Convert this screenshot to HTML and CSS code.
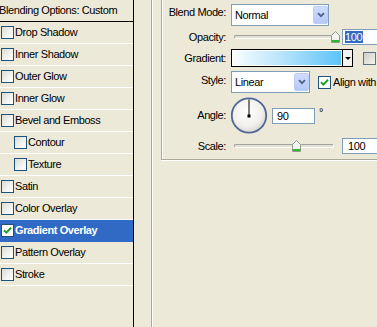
FILE: index.html
```html
<!DOCTYPE html>
<html lang="en">
<head>
    <meta charset="UTF-8">
    <title>Layer Style - Gradient Overlay</title>
    <link rel="stylesheet" href="styles.css">
</head>
<body>
    <div class="sidebar">
        <div class="head">Blending Options: Custom</div>
        <ul class="effects">
            <li><span class="check"></span>Drop Shadow</li>
            <li><span class="check"></span>Inner Shadow</li>
            <li><span class="check"></span>Outer Glow</li>
            <li><span class="check"></span>Inner Glow</li>
            <li><span class="check"></span>Bevel and Emboss</li>
            <li class="sub"><span class="check"></span>Contour</li>
            <li class="sub"><span class="check"></span>Texture</li>
            <li><span class="check"></span>Satin</li>
            <li><span class="check"></span>Color Overlay</li>
            <li class="on"><span class="check"><svg width="9" height="9" viewBox="0 0 9 9"><path d="M1 4.2 L3.4 6.6 L8 1.8" fill="none" stroke="#21a121" stroke-width="2"/></svg></span>Gradient Overlay</li>
            <li><span class="check"></span>Pattern Overlay</li>
            <li><span class="check"></span>Stroke</li>
        </ul>
    </div>
    <div class="panel">
        <div class="outer">
            <div class="group">
                <div class="row r-mode">
                    <span class="lbl">Blend Mode:</span>
                    <div class="select w-mode"><span class="val">Normal</span><span class="drop"><svg width="8" height="6" viewBox="0 0 8 6"><path d="M1 1.2 L4 4.2 L7 1.2" fill="none" stroke="#4d6185" stroke-width="1.8"/></svg></span></div>
                </div>
                <div class="row r-small">
                    <span class="lbl">Opacity:</span>
                    <div class="slider">
                        <span class="track"></span>
                        <svg class="thumb" style="left:100px" width="9" height="12" viewBox="0 0 9 12"><path d="M0.5 4.5 L4.5 0.5 L8.5 4.5 V11.5 H0.5 Z" fill="#f3f3ef" stroke="#8d9a8d"/><rect x="1" y="9" width="7" height="2" fill="#2eb82e"/></svg>
                    </div>
                    <span class="field w-num"><span class="sel">100</span></span>
                </div>
                <div class="row r-grad">
                    <span class="lbl">Gradient:</span>
                    <div class="grad"><span class="grad-fill"></span><span class="grad-arrow"><i></i></span></div>
                    <span class="check plain"></span>
                </div>
                <div class="row r-style">
                    <span class="lbl">Style:</span>
                    <div class="select w-style"><span class="val">Linear</span><span class="drop"><svg width="8" height="6" viewBox="0 0 8 6"><path d="M1 1.2 L4 4.2 L7 1.2" fill="none" stroke="#4d6185" stroke-width="1.8"/></svg></span></div>
                    <span class="check align"><svg width="9" height="9" viewBox="0 0 9 9"><path d="M1 4.2 L3.4 6.6 L8 1.8" fill="none" stroke="#21a121" stroke-width="2"/></svg></span>
                    <span class="opt">Align with</span>
                </div>
                <div class="row r-angle">
                    <span class="lbl">Angle:</span>
                    <svg class="dial" width="37" height="37" viewBox="0 0 37 37">
                        <defs>
                            <radialGradient id="dialFill" cx="0.45" cy="0.4" r="0.6">
                                <stop offset="0" stop-color="#ffffff"/>
                                <stop offset="0.7" stop-color="#f1f0ec"/>
                                <stop offset="1" stop-color="#d9d7cf"/>
                            </radialGradient>
                        </defs>
                        <circle cx="18" cy="18.5" r="17.2" fill="url(#dialFill)" stroke="#4f6797" stroke-width="1.8"/>
                        <line x1="18" y1="2.5" x2="18" y2="19" stroke="#000" stroke-width="1"/>
                        <rect x="16.5" y="17.5" width="3" height="3" fill="#000"/>
                    </svg>
                    <span class="field w-angle">90</span>
                    <span class="deg">°</span>
                </div>
                <div class="row r-small r-scale">
                    <span class="lbl">Scale:</span>
                    <div class="slider">
                        <span class="track"></span>
                        <svg class="thumb" style="left:61px" width="9" height="12" viewBox="0 0 9 12"><path d="M0.5 4.5 L4.5 0.5 L8.5 4.5 V11.5 H0.5 Z" fill="#f3f3ef" stroke="#8d9a8d"/><rect x="1" y="9" width="7" height="2" fill="#2eb82e"/></svg>
                    </div>
                    <span class="field w-num">100</span>
                </div>
            </div>
        </div>
    </div>
</body>
</html>
```

FILE: styles.css
```css
body,html{margin: 0; padding: 0;}
body{
    width: 377px; height: 327px; overflow: hidden; display: flex;
    background: #ece9d8; color: #000;
    font: 11px/13px "Liberation Sans", Arial, sans-serif; letter-spacing: -0.4px;
}

/* left list of effects */
.sidebar{width: 133px; flex: none; border-right: 1px solid #000; overflow: hidden;}
.head{height: 21px; line-height: 20px; border-bottom: 1px solid #000; margin-left: -1px; white-space: nowrap;}
.effects{list-style: none; margin: 0; padding: 0;}
.effects>li{
    height: 21px; border-bottom: 1px solid #fff; padding-left: 1px;
    display: flex; align-items: center; gap: 1px; white-space: nowrap;
}
.effects>li.sub{padding-left: 14px;}
.effects>li.on{background: #316ac5; border-bottom-color: #316ac5; color: #fff; font-weight: bold;}

.check{
    width: 11px; height: 11px; flex: none; border: 1px solid #1c5180;
    background: linear-gradient(135deg, #dcdcd5, #f7f7f4 70%, #fff);
    display: flex; align-items: center; justify-content: center;
}
.effects>li.on .check{background: #fff;}

/* right side group boxes */
.panel{flex: 1; padding-left: 17px;}
.outer{height: 100%; border-left: 1px solid #aca899; box-shadow: inset 1px 0 0 #fff; padding-left: 9px;}
.group{
    width: 260px; padding: 4px 0 5px;
    border-left: 1px solid #aca899; border-bottom: 1px solid #aca899;
    box-shadow: inset 1px 0 0 #fff, 0 1px 0 #fff;
}
.row{display: flex; align-items: center; white-space: nowrap;}
.lbl{width: 64px; margin-right: 5px; flex: none; text-align: right;}

.r-mode{height: 22px;}
.r-mode>.lbl{align-self: flex-start; margin-top: 2px;}
.r-small{height: 16px; margin-top: 3px;}
.r-grad{height: 18px; margin-top: 4px;}
.r-style{height: 22px; margin-top: 4px;}
.r-style>.lbl{align-self: flex-start; margin-top: 3px;}
.r-angle{height: 37px; margin-top: 4px;}
.r-scale{margin-top: 4px;}

.select{height: 20px; border: 1px solid #7f9db9; background: #fff; display: flex; flex: none;}
.select>.val{flex: 1; padding-left: 3px; line-height: 20px;}
.select>.drop{
    width: 13px; margin: 1px 0; border: 1px solid #bccdf8; border-radius: 2px;
    background: linear-gradient(#cfdcfd, #b6c9f7);
    display: flex; align-items: center; justify-content: center;
}
.w-mode{width: 96px;}
.w-style{width: 77px;}

.slider{width: 111px; height: 16px; position: relative; flex: none; display: flex; align-items: center;}
.track{
    width: 98px; height: 2px; margin-left: 3px;
    border: 1px solid; border-color: #a3a29c #fff #fff #a3a29c; border-radius: 2px; background: #e3e1d6;
}
.thumb{position: absolute; top: 2px;}

.field{height: 14px; line-height: 14px; border: 1px solid #7f9db9; background: #fff; padding-left: 4px; flex: none;}
.w-num{width: 40px;}
.w-num .sel{background: #316ac5; color: #fff; padding: 0 1px 0 0; margin-left: -2px;}
.r-scale .w-num{padding-left: 5px;}
.w-angle{width: 37px; margin-left: 4px;}
.deg{margin-left: 4px; align-self: flex-start; margin-top: 9px;}

.grad{width: 120px; height: 16px; border: 1px solid #000; display: flex; flex: none;}
.grad-fill{flex: 1; border: 1px solid #fff; background: linear-gradient(to right, #fafdff, #b8e4fb 45%, #5cc4f9);}
.grad-arrow{width: 9px; border-left: 1px solid #000; background: #f4f3ee; display: flex; align-items: center; justify-content: center;}
.grad-arrow>i{width: 0; height: 0; border-top: 3px solid #000; border-left: 3px solid transparent; border-right: 3px solid transparent;}
.check.plain{margin-left: 10px; border-color: #5d7189; background: linear-gradient(135deg, #cfcfc8, #f4f4f0);}
.check.align{margin-left: 8px; background: #fff;}
.opt{margin-left: 2px;}
.dial{flex: none;}
```
